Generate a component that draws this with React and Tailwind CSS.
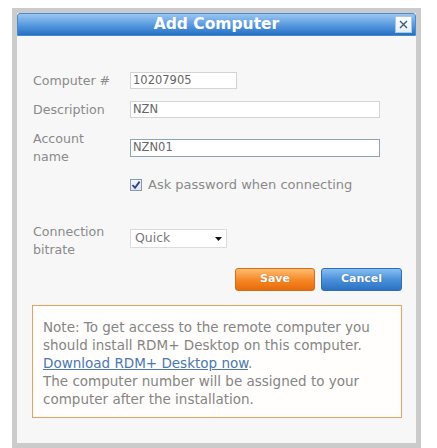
export default function App() {
  return (
    <div className="w-[437px] h-[448px] bg-white pt-[8px] pl-[12px] font-['DejaVu_Sans',Verdana,sans-serif]">
      <div className="w-[409px] h-[440px] bg-[#cbcbcb] p-[5px]">
        <div className="h-full bg-[#f7f7f7] flex flex-col">
          {/* Title bar */}
          <div className="relative h-[23px] rounded-t-[3px] border border-[#4a8ad0] bg-gradient-to-b from-[#9ac6f0] via-[#5b9ce0] to-[#2270c4] flex items-center justify-center">
            <span className="text-white font-bold text-[15.5px] leading-none mt-[1px]">Add Computer</span>
            <div className="absolute right-[3px] top-[2px] w-[17px] h-[17px] bg-gradient-to-b from-[#ffffff] to-[#e4eef8] border border-[#a9c8e8] flex items-center justify-center">
              <svg width="9" height="9" viewBox="0 0 9 9">
                <path d="M1 1 L8 8 M8 1 L1 8" stroke="#3f5a78" strokeWidth="1.4" />
              </svg>
            </div>
          </div>

          {/* Body */}
          <div className="pl-[16px]">
            <div className="mt-[36px] flex items-center h-[17px]">
              <span className="w-[97px] text-[12.6px] text-[#8a8a8a] mt-[1px]">Computer #</span>
              <div className="w-[107px] h-[17px] bg-white border border-[#d4d4d4] flex items-center pl-[2px] text-[11.5px] text-[#666]">10207905</div>
            </div>
            <div className="mt-[12px] flex items-center h-[17px]">
              <span className="w-[97px] text-[12.6px] text-[#8a8a8a] mt-[1px]">Description</span>
              <div className="w-[250px] h-[17px] bg-white border border-[#d4d4d4] flex items-center pl-[2px] text-[11.5px] text-[#666]">NZN</div>
            </div>
            <div className="mt-[12px] flex items-center h-[36px]">
              <span className="w-[97px] text-[12.6px] leading-[18px] text-[#8a8a8a]">Account<br />name</span>
              <div className="w-[250px] h-[18px] bg-white border border-[#8ea5b2] flex items-center pl-[2px] text-[11.5px] text-[#666]">NZN01</div>
            </div>
            <div className="mt-[10px] flex items-center h-[18px] pl-[97px]">
              <span className="w-[12px] h-[12px] border border-[#8898b0] bg-gradient-to-b from-[#f4f6fa] to-[#dfe4ee] flex items-center justify-center">
                <svg width="10" height="10" viewBox="0 0 10 10">
                  <path d="M1.5 5 L4 7.8 L8.6 1.6" stroke="#27408f" strokeWidth="1.8" fill="none" />
                </svg>
              </span>
              <span className="ml-[6px] text-[13px] text-[#8a8a8a]">Ask password when connecting</span>
            </div>
            <div className="mt-[29px] flex items-start">
              <span className="w-[97px] text-[12.6px] leading-[18px] text-[#8a8a8a]">Connection<br />bitrate</span>
              <div className="mt-[6px] w-[97px] h-[19px] bg-white border border-[#dcdcdc] flex items-center justify-between pl-[4px] pr-[4px] text-[12.5px] text-[#7a7a7a]">
                <span>Quick</span>
                <svg width="7" height="4" viewBox="0 0 7 4">
                  <path d="M0 0 L7 0 L3.5 4 Z" fill="#111" />
                </svg>
              </div>
            </div>
          </div>

          {/* Buttons */}
          <div className="mt-[9px] flex justify-end gap-[6px] pr-[14px]">
            <div className="w-[80px] h-[23px] rounded-[3px] border border-[#d56c1c] bg-gradient-to-b from-[#fdbd6e] via-[#f68a26] to-[#e86a0a] flex items-center justify-center text-white font-bold text-[11px] [text-shadow:0_0_1px_rgba(120,50,0,0.5)]">Save</div>
            <div className="w-[81px] h-[23px] rounded-[3px] border border-[#2d6db5] bg-gradient-to-b from-[#86c0f0] via-[#4a90da] to-[#2a72c2] flex items-center justify-center text-white font-bold text-[11px] [text-shadow:0_0_1px_rgba(0,40,100,0.5)]">Cancel</div>
          </div>

          {/* Note */}
          <div className="mt-[14px] ml-[15px] w-[370px] h-[113px] border border-[#e6a263] bg-[#fffefc] pl-[10px] pt-[12px] text-[13.5px] leading-[18px] text-[#858585] whitespace-nowrap">
            Note: To get access to the remote computer you<br />
            should install RDM+ Desktop on this computer.<br />
            <span className="text-[#4a78b0] underline">Download RDM+ Desktop now</span>.<br />
            The computer number will be assigned to your<br />
            computer after the installation.
          </div>
        </div>
      </div>
    </div>
  );
}
